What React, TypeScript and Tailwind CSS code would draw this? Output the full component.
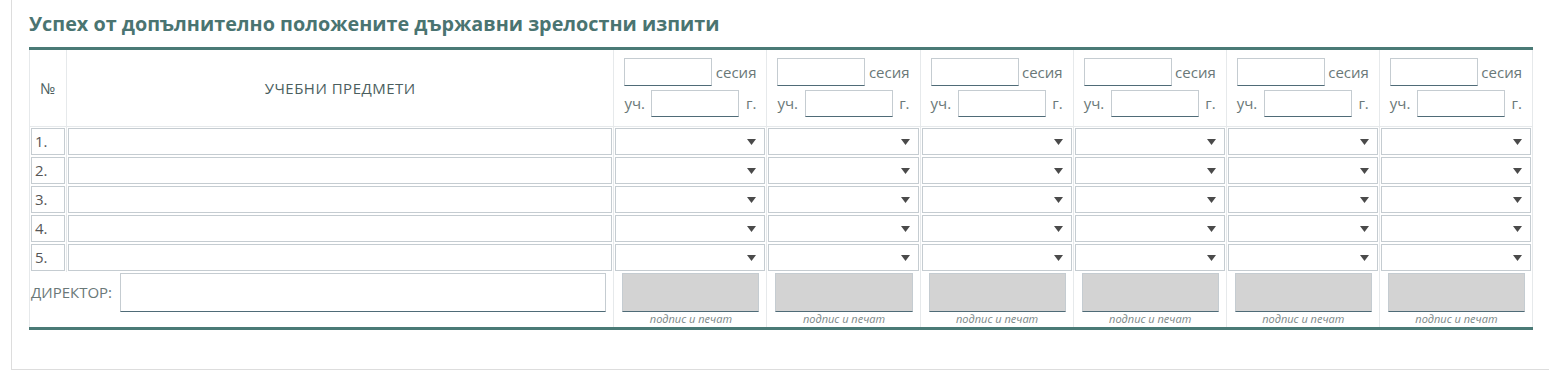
import React from "react"

const sessions = [0, 1, 2, 3, 4, 5]
const rows = [1, 2, 3, 4, 5]

function Arrow() {
  return (
    <svg width="9" height="6" viewBox="0 0 9 6" className="absolute right-[8px] top-[10px]">
      <path d="M0 0 L9 0 L4.5 6 Z" fill="#4a4a4a" />
    </svg>
  )
}

function SessionHeader() {
  return (
    <th className="w-[153px] border border-t-0 border-[#e6e9eb] px-[10px] pt-[8px] pb-[9px] align-top font-normal">
      <div className="flex h-[28px] items-center justify-between">
        <div className="h-[28px] w-[88px] border border-[#c5ccd1] border-b-[#4f6b77] border-b-dotted bg-white" />
        <span className="text-[15px] leading-[20px] text-[#6a7878]">сесия</span>
      </div>
      <div className="mt-[3px] flex h-[28px] items-center justify-between">
        <span className="text-[15px] leading-[20px] text-[#6a7878]">уч.</span>
        <div className="h-[27px] w-[88px] border border-[#c5ccd1] border-b-[#4f6b77] border-b-dotted bg-white" />
        <span className="text-[15px] leading-[20px] text-[#6a7878]">г.</span>
      </div>
    </th>
  )
}

export default function App() {
  return (
    <div className="h-[379px] w-[1549px] overflow-hidden bg-white" style={{ fontFamily: '"Open Sans", "Noto Sans", sans-serif' }}>
      <div className="ml-[11px] -mt-[10px] h-[380px] border-b border-l border-[#dddddd] pl-[17px] pt-[21px]">
        <h2 className="text-[19.8px] font-bold leading-[26px] text-[#4a7471]">
          Успех от допълнително положените държавни зрелостни изпити
        </h2>
        <div className="mt-[10px] w-[1504px] border-y-[3px] border-[#4a7a76]">
          <table className="w-full table-fixed">
            <colgroup>
              <col className="w-[37px]" />
              <col className="w-[547px]" />
              {sessions.map((s) => (
                <col key={s} className="w-[153px]" />
              ))}
            </colgroup>
            <thead>
              <tr className="h-[76px]">
                <th className="border border-t-0 border-[#e6e9eb] text-[15px] font-normal text-[#4b5e5e]">№</th>
                <th className="border border-t-0 border-[#e6e9eb] text-[15px] font-normal uppercase tracking-[0.5px] text-[#4b5e5e]">
                  учебни предмети
                </th>
                {sessions.map((s) => (
                  <SessionHeader key={s} />
                ))}
              </tr>
            </thead>
            <tbody>
              {rows.map((r) => (
                <tr key={r}>
                  <td className="border-x border-[#e6e9eb] p-[1px]">
                    <div className="flex h-[27px] items-center border border-[#c5ccd1] pl-[3px] text-[15px] text-[#555]">
                      {r}.
                    </div>
                  </td>
                  <td className="border-x border-[#e6e9eb] p-[1px]">
                    <div className="h-[27px] border border-[#c5ccd1] bg-white" />
                  </td>
                  {sessions.map((s) => (
                    <td key={s} className="border-x border-[#e6e9eb] p-[1px]">
                      <div className="relative h-[27px] border border-[#c5ccd1] bg-white">
                        <Arrow />
                      </div>
                    </td>
                  ))}
                </tr>
              ))}
              <tr className="h-[55px]">
                <td colSpan={2} className="border-x border-b-0 border-[#e6e9eb] pb-[14px] pl-[1px] pr-[7px] pt-[1px] align-top">
                  <div className="flex items-center">
                    <span className="w-[89px] text-[15px] text-[#6a7878]">ДИРЕКТОР:</span>
                    <div className="h-[39px] flex-1 border border-[#c5ccd1] border-b-[#4f6b77] border-b-dotted bg-white" />
                  </div>
                </td>
                {sessions.map((s) => (
                  <td key={s} className="border-x border-[#e6e9eb] pl-[8px] pr-[7px] pt-[1px] align-top">
                    <div className="h-[39px] border border-[#c5ccd1] border-b-[#4f6b77] border-b-dotted bg-[#d3d3d3]" />
                    <div className="text-center text-[11px] italic leading-[14px] text-[#7a8686]">подпис и печат</div>
                  </td>
                ))}
              </tr>
            </tbody>
          </table>
        </div>
      </div>
    </div>
  )
}
